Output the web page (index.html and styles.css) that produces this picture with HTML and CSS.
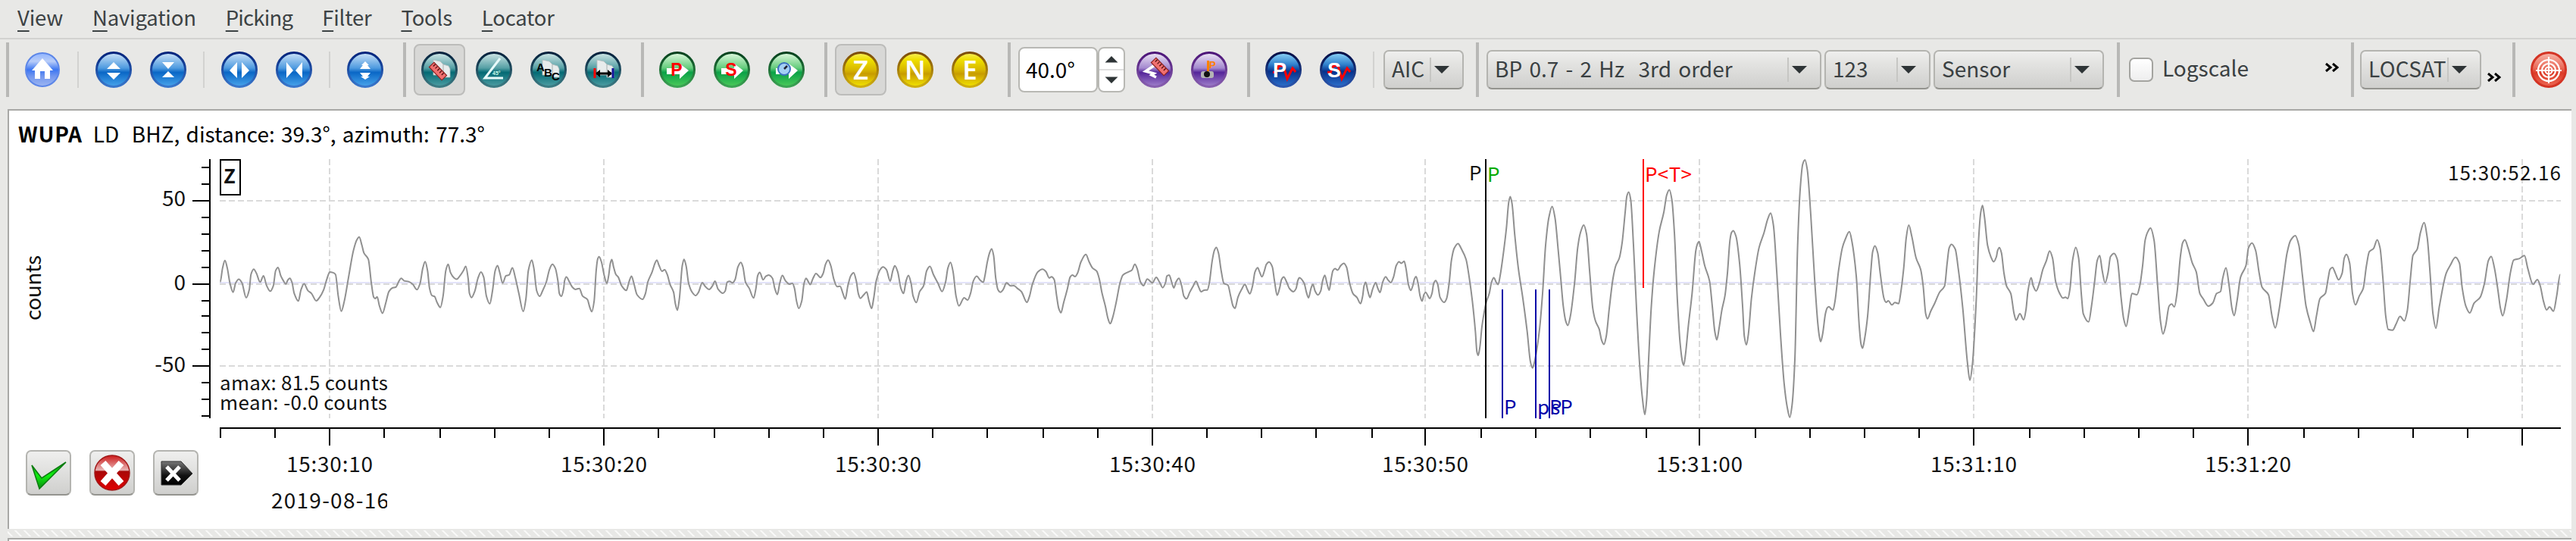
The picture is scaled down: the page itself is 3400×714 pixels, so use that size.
FILE: index.html
```html
<!DOCTYPE html>
<html lang="en">
<head>
    <meta charset="UTF-8">
    <title>Picker</title>
    <link rel="stylesheet" href="styles.css">
</head>
<body>

<svg class="defs" width="0" height="0">
    <defs>
        <linearGradient id="home" x1="0" y1="0" x2="0" y2="1"><stop offset="0" stop-color="#8fb4ff"/><stop offset=".25" stop-color="#b9cdf8"/><stop offset=".5" stop-color="#3c76f2"/><stop offset=".7" stop-color="#7397ee"/><stop offset="1" stop-color="#9db6f2"/></linearGradient>
        <linearGradient id="blue" x1="0" y1="0" x2="0" y2="1"><stop offset="0" stop-color="#cfe4f8"/><stop offset=".45" stop-color="#4f9be0"/><stop offset=".58" stop-color="#0a67c6"/><stop offset="1" stop-color="#4aa6ec"/></linearGradient>
        <linearGradient id="teal" x1="0" y1="0" x2="0" y2="1"><stop offset="0" stop-color="#d3e8e8"/><stop offset=".45" stop-color="#56a0a5"/><stop offset=".58" stop-color="#046a74"/><stop offset="1" stop-color="#4f9fa4"/></linearGradient>
        <linearGradient id="green" x1="0" y1="0" x2="0" y2="1"><stop offset="0" stop-color="#e2fae0"/><stop offset=".45" stop-color="#64cc7c"/><stop offset=".58" stop-color="#0ba147"/><stop offset="1" stop-color="#4ccb5a"/></linearGradient>
        <linearGradient id="yellow" x1="0" y1="0" x2="0" y2="1"><stop offset="0" stop-color="#f8ee60"/><stop offset=".2" stop-color="#efe000"/><stop offset=".5" stop-color="#d8b800"/><stop offset=".62" stop-color="#c89c00"/><stop offset="1" stop-color="#f4e600"/></linearGradient>
        <linearGradient id="purple" x1="0" y1="0" x2="0" y2="1"><stop offset="0" stop-color="#efe8f6"/><stop offset=".45" stop-color="#a489cf"/><stop offset=".58" stop-color="#55259a"/><stop offset="1" stop-color="#a181cc"/></linearGradient>
        <linearGradient id="navy" x1="0" y1="0" x2="0" y2="1"><stop offset="0" stop-color="#8fd6f8"/><stop offset=".35" stop-color="#2f80cc"/><stop offset=".55" stop-color="#06328c"/><stop offset="1" stop-color="#2c70cc"/></linearGradient>
        <linearGradient id="red" x1="0" y1="0" x2="0" y2="1"><stop offset="0" stop-color="#f8b8ac"/><stop offset=".45" stop-color="#ea6a58"/><stop offset=".6" stop-color="#dc3c28"/><stop offset="1" stop-color="#ec6854"/></linearGradient>
        <linearGradient id="darkred" x1="0" y1="0" x2="0" y2="1"><stop offset="0" stop-color="#cc1818"/><stop offset=".42" stop-color="#e8b4b4"/><stop offset=".46" stop-color="#a80808"/><stop offset="1" stop-color="#e00000"/></linearGradient>
        <linearGradient id="tag" x1="0" y1="0" x2="0" y2="1"><stop offset="0" stop-color="#777"/><stop offset=".6" stop-color="#111"/><stop offset="1" stop-color="#000"/></linearGradient>
        <linearGradient id="check" x1="0" y1="0" x2="0" y2="1"><stop offset="0" stop-color="#0a9a10"/><stop offset=".5" stop-color="#10f010"/><stop offset="1" stop-color="#0a8a10"/></linearGradient>
        <linearGradient id="blueRim" x1="0" y1="0" x2="0" y2="1"><stop offset="0" stop-color="#02237c"/><stop offset="1" stop-color="#3a78cc"/></linearGradient>
        <linearGradient id="tealRim" x1="0" y1="0" x2="0" y2="1"><stop offset="0" stop-color="#04203c"/><stop offset="1" stop-color="#3c7c84"/></linearGradient>
        <linearGradient id="greenRim" x1="0" y1="0" x2="0" y2="1"><stop offset="0" stop-color="#04401c"/><stop offset="1" stop-color="#3ca454"/></linearGradient>
        <linearGradient id="yellowRim" x1="0" y1="0" x2="0" y2="1"><stop offset="0" stop-color="#7c4c08"/><stop offset="1" stop-color="#d0b010"/></linearGradient>
        <linearGradient id="purpleRim" x1="0" y1="0" x2="0" y2="1"><stop offset="0" stop-color="#4c1478"/><stop offset="1" stop-color="#8860b0"/></linearGradient>
        <linearGradient id="navyRim" x1="0" y1="0" x2="0" y2="1"><stop offset="0" stop-color="#020c44"/><stop offset="1" stop-color="#2c58b0"/></linearGradient>
        <path id="pages" d="M16 11l9 2 4 4v14H16zM29 17l7 2 2 4v11h-9z" fill="#e8ecec" stroke="#b4bcbc" stroke-width=".8"/>
        <path id="arrow" d="M10 22h17v-6l12 9-12 11v-6H10z" fill="#fff"/>
        <g id="ruler"><rect x="-12" y="-4.5" width="24" height="9" fill="#f07070" stroke="#8c2020" stroke-width="1.2"/><path d="M-9-4v4M-5-4v4M-1-4v4M3-4v4M7-4v4" stroke="#501010" stroke-width="1.3"/></g>
    </defs>
</svg>

<nav class="menu">
    <span><u>V</u>iew</span>
    <span><u>N</u>avigation</span>
    <span class="tight"><u>P</u>icking</span>
    <span><u>F</u>ilter</span>
    <span><u>T</u>ools</span>
    <span><u>L</u>ocator</span>
</nav>

<div class="toolbar">
    <i class="handle first"></i>
    <button class="tool"><svg viewBox="0 0 48 48"><circle cx="24" cy="24" r="22" fill="url(#home)" stroke="#5c86e8" stroke-width="2"/><path d="M24 9L38 25h-4v11h-7V26h-6v10h-7V25h-4z" fill="#fff"/></svg></button>
    <i class="sep"></i>
    <button class="tool"><svg viewBox="0 0 48 48"><circle class="ball blue" cx="24" cy="24" r="22.5"/><path d="M24 14l9 9H15zM24 37l9-9H15z" fill="#fff"/></svg></button>
    <button class="tool"><svg viewBox="0 0 48 48"><circle class="ball blue" cx="24" cy="24" r="22.5"/><path d="M24 23l8-9H16zM24 26l8 8H16z" fill="#fff"/></svg></button>
    <i class="sep"></i>
    <button class="tool"><svg viewBox="0 0 48 48"><circle class="ball blue" cx="24" cy="24" r="22.5"/><path d="M21 14v21L11 25zM27 14v21l10-10z" fill="#fff"/></svg></button>
    <button class="tool"><svg viewBox="0 0 48 48"><circle class="ball blue" cx="24" cy="24" r="22.5"/><path d="M14 14v21l9-10zM35 14v21l-9-10z" fill="#fff"/></svg></button>
    <i class="sep"></i>
    <button class="tool"><svg viewBox="0 0 48 48"><circle class="ball blue" cx="24" cy="24" r="22.5"/><path d="M24 13l5 5h-2l4 5H17l4-5h-2zM17 28h14l-4 5h3l-6 4-6-4h3z" fill="#fff"/></svg></button>

    <i class="handle"></i>
    <button class="tool active"><svg viewBox="0 0 48 48"><circle class="ball teal" cx="24" cy="24" r="22.5"/><use href="#pages"/><use href="#ruler" transform="translate(22 26) rotate(46)"/></svg></button>
    <button class="tool"><svg viewBox="0 0 48 48"><circle class="ball teal" cx="24" cy="24" r="22.5"/><path d="M32 9L12 35h24" fill="none" stroke="#e8fafa" stroke-width="3"/><text x="22" y="31" class="tiny">45°</text></svg></button>
    <button class="tool"><svg viewBox="0 0 48 48"><circle class="ball teal" cx="24" cy="24" r="22.5"/><use href="#pages"/><g class="abc"><text x="8" y="26">A</text><text x="18" y="33">B</text><text x="28" y="38">C</text></g></svg></button>
    <button class="tool"><svg viewBox="0 0 48 48"><circle class="ball teal" cx="24" cy="24" r="22.5"/><use href="#pages"/><path d="M15 29h20" stroke="#000" stroke-width="3"/><path d="M14 29l6-5v10zM36 29l-6-5v10z"/><path d="M13 22v13" stroke="#f00" stroke-width="3"/><path d="M37 22v13" stroke="#11119a" stroke-width="3"/></svg></button>

    <i class="handle"></i>
    <button class="tool"><svg viewBox="0 0 48 48"><circle class="ball green" cx="24" cy="24" r="22.5"/><use href="#arrow"/><text x="23" y="32" class="phase">P</text></svg></button>
    <button class="tool"><svg viewBox="0 0 48 48"><circle class="ball green" cx="24" cy="24" r="22.5"/><use href="#arrow"/><text x="23" y="32" class="phase">S</text></svg></button>
    <button class="tool"><svg viewBox="0 0 48 48"><circle class="ball green" cx="24" cy="24" r="22.5"/><use href="#arrow"/><circle cx="21" cy="23" r="8" fill="#a4d0f4" stroke="#3c70c0" stroke-width="2"/><path d="M25 19l-4 4" fill="none" stroke="#223" stroke-width="2.5"/></svg></button>

    <i class="handle"></i>
    <button class="tool active"><svg viewBox="0 0 48 48"><circle class="ball yellow" cx="24" cy="24" r="22.5"/><text x="24" y="37" class="comp">Z</text></svg></button>
    <button class="tool"><svg viewBox="0 0 48 48"><circle class="ball yellow" cx="24" cy="24" r="22.5"/><text x="24" y="37" class="comp">N</text></svg></button>
    <button class="tool"><svg viewBox="0 0 48 48"><circle class="ball yellow" cx="24" cy="24" r="22.5"/><text x="24" y="37" class="comp">E</text></svg></button>

    <i class="handle"></i>
    <div class="spin">
        <span class="value">40.0°</span>
        <span class="steps"><svg viewBox="0 0 34 56"><path d="M17 9l9 9H8zM17 47l9-9H8z" fill="#2e3436"/><path d="M0 28h34" stroke="#ddd" stroke-width="2"/></svg></span>
    </div>
    <button class="tool"><svg viewBox="0 0 48 48"><circle class="ball purple" cx="24" cy="24" r="22.5"/><path d="M24 18L12 26l11 3-3 2 6 3" fill="none" stroke="#fff" stroke-width="3.5"/><use href="#ruler" transform="translate(31 20) rotate(46)"/></svg></button>
    <button class="tool"><svg viewBox="0 0 48 48"><circle class="ball purple" cx="24" cy="24" r="22.5"/><rect x="13" y="26" width="17" height="9" rx="3" fill="#b4b4b4"/><circle cx="21" cy="30" r="4" fill="#111"/><path d="M22.500 26V12" stroke="#ff8000" stroke-width="3"/><text x="24" y="22" class="ip">P</text></svg></button>

    <i class="handle"></i>
    <button class="tool"><svg viewBox="0 0 48 48"><circle class="ball navy" cx="24" cy="24" r="22.5"/><path class="wiggle" d="M10 27l4 1 4-9h6l5 17 7-14 4 5"/><text x="19" y="34" class="auto">P</text></svg></button>
    <button class="tool"><svg viewBox="0 0 48 48"><circle class="ball navy" cx="24" cy="24" r="22.5"/><path class="wiggle" d="M10 27l4 1 4-9h6l5 17 7-14 4 5"/><text x="19" y="34" class="auto">S</text></svg></button>
    <i class="sep"></i>
    <div class="combo aic"><span>AIC</span></div>

    <i class="handle"></i>
    <div class="combo filter"><span>BP 0.7 - 2 Hz&nbsp; 3rd order</span></div>
    <div class="combo num"><span>123</span></div>
    <div class="combo unit"><span>Sensor</span></div>

    <i class="handle"></i>
    <label class="check"><i></i><span>Logscale</span></label>
    <svg class="more" viewBox="0 0 18 12"><path d="M1 1l6 5-6 5M10 1l6 5-6 5"/></svg>

    <i class="handle"></i>
    <div class="combo loc"><span>LOCSAT</span></div>
    <svg class="more low" viewBox="0 0 18 12"><path d="M1 1l6 5-6 5M10 1l6 5-6 5"/></svg>

    <i class="handle"></i>
    <button class="tool"><svg viewBox="0 0 48 48"><circle cx="24" cy="24" r="22.5" fill="url(#red)" stroke="#d43424" stroke-width="3"/><g fill="none" stroke="#fff" stroke-width="2.2"><circle cx="24" cy="25" r="14"/><circle cx="24" cy="25" r="9"/><circle cx="24" cy="25" r="4.500"/><path d="M24 7v35M7 25h34"/></g></svg></button>
</div>

<main class="panel">
    <div class="station"><b>WUPA</b><span>LD&nbsp; BHZ, distance: 39.3°, azimuth: 77.3°</span></div>

    <svg class="yaxis" viewBox="12 210 268 346">
        <g id="yticks" class="axis"></g>
        <text x="245" y="272" text-anchor="end">50</text>
        <text x="245" y="383" text-anchor="end">0</text>
        <text x="245" y="491" text-anchor="end">-50</text>
        <text transform="translate(54 423) rotate(-90)" textLength="86">counts</text>
    </svg>

    <svg class="plot" viewBox="290 210 3090 346">
        <g id="grid" class="grid"></g>
        <path d="M290 373H3380" stroke="#e4e4fa" stroke-width="2"/>
        <path id="trace" class="trace"/>
        <rect x="291" y="211" width="26" height="46" fill="#fff" stroke="#000" stroke-width="2"/>
        <text x="295" y="242" class="small bold">Z</text>
        <text x="290" y="515" class="small" textLength="222">amax: 81.5 counts</text>
        <text x="290" y="541" class="small" textLength="221">mean: -0.0 counts</text>
        <text x="3231" y="238" class="small" textLength="149">15:30:52.16</text>

        <path d="M1961 210V552" stroke="#000" stroke-width="2"/>
        <text x="1939" y="238" class="small">P</text>
        <text x="1963" y="240" class="small green-pick">P</text>
        <path d="M2169 210V380" stroke="#f00" stroke-width="2"/>
        <text x="2171" y="240" class="small red-pick" textLength="62">P&lt;T&gt;</text>
        <path d="M1983 382V552M2027 382V552M2045 382V552" stroke="#0000a8" stroke-width="2"/>
        <text x="1985" y="547" class="small theo">P</text>
        <text x="2029" y="547" class="small theo">pP</text>
        <text x="2047" y="547" class="small theo">sP</text>
    </svg>

    <div class="actions">
        <button><svg viewBox="0 0 56 56"><path d="M6 18l13 17L51 14 16 49z" fill="url(#check)" stroke="#0c7c10" stroke-width="1.500"/></svg></button>
        <button><svg viewBox="0 0 56 56"><circle cx="28" cy="28" r="23" fill="url(#darkred)" stroke="#a01818" stroke-width="1.500"/><path d="M16 15l24 27M40 15L16 42" stroke="#fff" stroke-width="9"/></svg></button>
        <button><svg viewBox="0 0 56 56"><path d="M9 13h26l15 16-15 15H9z" fill="url(#tag)" stroke="#333"/><path d="M16 20l17 18M33 20L16 38" stroke="#fff" stroke-width="5"/></svg></button>
    </div>

    <svg class="xaxis" viewBox="290 556 3090 142">
        <g id="xticks" class="axis"></g>
        <g id="xlabels"></g>
    </svg>
</main>
<div class="splitter"></div>
<div class="next"></div>

<script src="plot.js"></script>
</body>
</html>
```
FILE: styles.css
```css
body {
    margin: 0;
    width: 3400px;
    height: 714px;
    overflow: hidden;
    background: #e8e8e6;
    font-family: "Noto Sans CJK SC", "Noto Sans", sans-serif;
    font-size: 28px;
    line-height: 36px;
    color: #3a4042;
}
.defs {
    display: block;
}
button {
    border: none;
    background: none;
    padding: 0;
    margin: 0;
}
.menu {
    display: flex;
    gap: 39px;
    box-sizing: border-box;
    height: 52px;
    padding: 4px 0 0 23px;
    border-bottom: 2px solid #d2d2d0;
    font-size: 27.5px;
    letter-spacing: -0.2px;
    color: #3c4244;
}
.menu .tight {
    letter-spacing: -0.8px;
}
.menu u {
    text-decoration-thickness: 2px;
    text-underline-offset: 6px;
}
.toolbar {
    display: flex;
    align-items: center;
    height: 80px;
    margin-bottom: 12px;
    white-space: nowrap;
}
.handle {
    flex: none;
    width: 4px;
    height: 72px;
    margin: 0 8px 0 14px;
    background: #b8b8b6;
}
.handle.first {
    margin-left: 8px;
}
.sep {
    flex: none;
    width: 2px;
    height: 48px;
    margin: 0 10px;
    background: #d2d2d0;
}
.tool {
    flex: none;
    box-sizing: border-box;
    width: 68px;
    height: 68px;
    margin: 0 2px;
    border: 2px solid transparent;
    border-radius: 8px;
    display: flex;
    align-items: center;
    justify-content: center;
}
.tool.active {
    background: #d8d8d6;
    border-color: #bcbcba;
}
.tool svg {
    width: 48px;
    height: 48px;
}
.ball {
    stroke-width: 3px;
}
.blue { fill: url(#blue); stroke: url(#blueRim); }
.teal { fill: url(#teal); stroke: url(#tealRim); }
.green { fill: url(#green); stroke: url(#greenRim); }
.yellow { fill: url(#yellow); stroke: url(#yellowRim); }
.purple { fill: url(#purple); stroke: url(#purpleRim); }
.navy { fill: url(#navy); stroke: url(#navyRim); }
.tool text {
    font-family: "Liberation Sans", Arial, sans-serif;
    font-weight: bold;
}
.tiny {
    font-size: 7px;
    fill: #cfe;
}
.abc {
    font-size: 15px;
    fill: #000;
}
.phase {
    font-size: 23px;
    fill: #f00;
    text-anchor: middle;
}
.comp {
    font-size: 35px;
    fill: #fff;
    text-anchor: middle;
}
.tool .comp {
    font-family: "Noto Sans", sans-serif;
    font-weight: 600;
}
.ip {
    font-size: 13px;
    fill: #ff8000;
}
.auto {
    font-size: 27px;
    fill: #fff;
    text-anchor: middle;
}
.wiggle {
    fill: none;
    stroke: #f00;
    stroke-width: 3px;
}
.spin {
    flex: none;
    display: flex;
    box-sizing: border-box;
    width: 141px;
    height: 60px;
    margin: 0 3px 0 2px;
    color: #000;
}
.spin span {
    box-sizing: border-box;
    background: #fff;
    border: 2px solid #b8b8b4;
    border-radius: 8px;
}
.value {
    width: 105px;
    padding: 9px 0 0 8px;
}
.steps {
    width: 36px;
}
.steps svg {
    display: block;
    width: 32px;
    height: 56px;
}
.combo {
    flex: none;
    position: relative;
    box-sizing: border-box;
    height: 52px;
    margin-right: 4px;
    padding: 4px 0 0 9px;
    border: 2px solid #b4b4b0;
    border-bottom-color: #94948f;
    border-radius: 7px;
    background: linear-gradient(#efefee, #e4e4e2 30%, #cfcfcd);
}
.combo::before {
    content: "";
    position: absolute;
    top: 8px;
    right: 41px;
    width: 2px;
    height: 32px;
    background: #c6c6c3;
}
.combo::after {
    content: "";
    position: absolute;
    top: 19px;
    right: 17px;
    border: 10px solid transparent;
    border-top-color: #2e3436;
    border-bottom: none;
}
.aic { width: 106px; margin-left: 2px; margin-right: 2px; }
.filter { width: 442px; margin-left: 2px; word-spacing: 3px; }
.num { width: 140px; }
.unit { width: 225px; margin-right: 3px; }
.loc { width: 160px; margin: 0 8px 0 0; letter-spacing: 0.3px; }
.check {
    display: flex;
    align-items: center;
    width: 254px;
    margin-left: 4px;
}
.check i {
    box-sizing: border-box;
    width: 32px;
    height: 32px;
    margin-right: 12px;
    border: 2px solid #a4a4a0;
    border-radius: 7px;
    background: linear-gradient(#fff, #eee);
}
.check span {
    margin-top: -6px;
}
.more {
    flex: none;
    width: 18px;
    height: 12px;
    margin: -6px 2px 0 8px;
    fill: none;
    stroke: #000;
    stroke-width: 3px;
}
.more.low {
    margin: 19px 1px 0 0;
}
.panel {
    box-sizing: border-box;
    display: grid;
    grid-template-columns: 268px 3090px;
    grid-template-rows: 64px 346px 142px;
    column-gap: 10px;
    width: 3384px;
    height: 554px;
    margin-left: 10px;
    border-top: 2px solid #a8a8a6;
    border-left: 2px solid #a8a8a6;
    background: #fff;
    color: #000;
}
.panel svg {
    display: block;
}
.panel text {
    fill: #111;
}
.station {
    grid-column: 1 / 3;
    padding: 12px 0 0 12px;
    white-space: nowrap;
    word-spacing: 2px;
}
.station b {
    margin-right: 14px;
    letter-spacing: 0.8px;
}
.yaxis {
    width: 268px;
    height: 346px;
    overflow: visible;
}
.plot {
    width: 3090px;
    height: 346px;
}
.xaxis {
    width: 3090px;
    height: 142px;
}
.small {
    font-size: 26px;
}
.bold {
    font-weight: bold;
}
.panel .green-pick { fill: #00aa00; }
.panel .red-pick { fill: #f00; }
.panel .theo { fill: #0000a8; }
.axis {
    stroke: #000;
    stroke-width: 2px;
    fill: none;
}
.grid {
    stroke: #dadada;
    stroke-width: 2px;
    stroke-dasharray: 8 4;
}
.trace {
    fill: none;
    stroke: #909090;
    stroke-width: 2px;
}
.actions {
    display: flex;
    gap: 24px;
    padding: 38px 0 0 22px;
}
.actions button {
    box-sizing: border-box;
    width: 60px;
    height: 60px;
    border: 2px solid #b4b4b0;
    border-bottom-color: #94948f;
    border-radius: 7px;
    background: linear-gradient(#efefee, #cfcfcd);
}
.splitter {
    height: 8px;
    margin-left: 10px;
    width: 3384px;
    border-top: 2px solid #e8e8e6;
    border-bottom: 2px solid #e8e8e6;
    background: repeating-linear-gradient(45deg, #e8e8e6 0 3px, #f8f8f7 3px 5.500px, #e8e8e6 5.500px 8.485px);
}
.next {
    width: 3382px;
    height: 2px;
    margin-left: 10px;
    border-top: 2px solid #a8a8a6;
    border-left: 2px solid #a8a8a6;
    background: #fff;
}
```
FILE: plot.js
```js
// trace blocks: x origin, units per pixel, then x,y pairs
const blocks = [
    [0, 2.24, `651,545 658,490 665,460 672,490 680,550 689,585 697,548 706,534 715,547 728,607 737,575 742,515 750,494 758,510 769,545
        779,520 788,558 799,581 808,560 815,500 822,487 830,520 838,540 845,553 851,537 857,530 863,545 870,590 882,620 890,575 899,552
        910,578 921,590 935,619 945,605 957,575 966,535 975,505 985,508 992,515 1000,600 1009,660 1018,620 1030,530 1045,420 1055,378
        1062,367 1070,400 1076,430 1089,455 1098,550 1105,605 1109,610 1115,603 1122,640 1131,668 1140,630 1150,582 1160,568 1170,565
        1180,540 1186,530 1195,540 1208,543 1220,553 1233,575 1242,550 1250,490 1257,464 1264,500 1270,570 1277,598 1285,602 1292,625
        1302,645 1310,600 1318,500 1325,475 1332,508 1342,528 1350,534 1360,520 1370,500 1377,483 1384,530 1388,590 1394,606 1404,580
        1413,530 1422,505 1430,525 1438,600 1448,631 1456,580 1464,500 1471,480 1478,510 1486,549 1496,520 1505,517 1515,489 1524,530
        1534,590 1547,661 1555,610 1562,500`],
    [700, 2.613, `5,458 12,490 22,580 32,601 42,580 55,545 66,495 76,475 86,490 95,540 100,590 107,601 115,570 118,540 124,525 135,545
        145,565 155,574 169,570 180,600 197,614 205,645 212,662 220,620 227,500 232,455 237,445 245,465 255,520 264,550 270,520 276,470
        281,456 287,485 295,515 303,525 315,560 331,578 340,545 349,522 357,550 368,595 387,613 397,590 405,545 420,505 430,470 436,458
        444,480 454,502 463,496 472,515 482,555 494,585 500,630 507,656 514,610 524,480 530,455 537,480 546,550 558,585 570,598 580,585
        593,547 603,562 617,574 628,560 637,541 647,572 664,589 672,580 679,545 687,542 697,548 706,535 716,485 726,467 733,485 742,545
        755,570 770,608 778,570 784,520 791,507 803,536 812,522 822,517 835,530 843,570 852,594 860,550 869,519 880,540 893,553 904,550
        911,570 918,620 926,649 936,620 944,550 951,530 957,540 965,555 975,530 985,511 1001,527 1010,510 1018,475 1027,458 1036,480
        1047,535 1058,563 1068,561 1078,590 1086,612 1095,560 1105,520 1115,508 1124,540 1131,590 1138,609 1150,595 1160,584 1168,620
        1177,649 1184,610 1193,540 1207,495 1216,485 1228,496 1241,541 1250,500 1257,481 1267,505 1278,570 1287,590 1296,540 1304,519
        1313,550 1320,600 1331,626 1343,582 1356,560 1367,500 1378,483 1390,515 1405,548 1420,582 1432,545 1440,490 1449,467 1458,505
        1468,600 1478,639 1496,607 1508,616 1518,590 1528,540 1539,522 1552,538 1562,546`],
    [1300, 2.8, `0,520 8,470 17,430 25,414 32,440 40,530 48,575 57,585 67,575 80,548 95,560 107,559 120,570 135,583 155,625 165,600
        175,555 195,505 213,494 225,503 238,529 246,524 256,535 265,600 273,650 281,666 290,630 305,570 315,525 323,517 333,523 342,510
        355,465 373,436 385,465 398,490 413,502 422,530 433,590 445,640 455,690 463,709 472,685 485,625 500,545 510,517 530,505 543,498
        554,475 562,490 575,545 586,559 600,533 619,548 633,526 645,545 657,567 668,545 672,522 681,517 690,545 698,568 706,545 717,530
        727,560 735,600 745,611 757,585 770,560 780,542 790,565 799,583 810,577 822,576 829,550 840,460 848,420 855,408 863,430 873,500
        883,550 898,557 908,600 917,640 924,649 935,605 948,575 961,554 970,575 979,591 989,560 998,505 1008,488 1015,505 1024,524
        1033,500 1040,475 1050,466 1062,485 1070,540 1080,597 1090,565 1096,535 1104,525 1115,545 1125,570 1140,583 1150,570 1156,540
        1162,528 1180,550 1188,585 1196,607 1205,570 1212,554 1220,580 1231,596 1241,580 1248,540 1256,518 1264,550 1272,577 1280,530
        1286,500 1294,492 1303,498 1315,480 1326,471 1336,485 1348,550 1360,590 1375,606 1388,630 1396,600 1401,560 1407,546 1415,580
        1423,606 1432,575 1444,547 1452,570 1460,586 1470,545 1481,524 1490,537 1500,547 1510,525 1520,480 1530,465 1539,471`],
    [1850, 3, `10,463 17,490 27,555 36,578 44,560 51,532 57,523 65,550 73,600 81,620 88,595 95,585 103,597 111,610 120,590 127,550
        135,539 143,555 152,605 168,625 178,610 188,550 197,460 208,412 223,393 237,415 255,455 268,530 280,620 292,740 298,820 303,834
        310,800 318,720 335,625 347,590 356,545 365,528 374,545 382,555 390,520 403,430 415,330 424,230 430,208 437,235 448,360 462,490
        480,610 497,740 510,860 518,884 526,860 545,740 558,590 570,400 583,290 596,247 607,290 620,420 630,530 640,640 650,700 658,716
        668,680 685,545 697,410 708,350 721,320 732,355 745,510 757,650 768,700 782,730 792,775 801,791 810,760 822,650 837,530 848,480
        862,450 873,390 885,270 892,205 899,190 907,220 918,400 930,650 943,880 953,1000 963,1068 970,1010 978,850 988,650 1000,500
        1020,345 1038,270 1050,200 1060,181 1070,220 1080,350 1092,620 1103,790 1112,860 1117,873 1124,830 1135,720 1150,590 1165,420
        1171,395 1177,385 1187,420 1200,480 1219,540 1230,640 1240,740`],
    [2260, 3, `18,773 28,720 38,655 50,600 60,510 70,380 76,350 83,342 94,365 108,470 120,640 127,760 135,793 143,750 155,610 168,510
        185,410 205,350 220,295 231,273 242,320 255,500 270,750 285,950 297,1040 307,1079 316,1030 327,850 338,400 348,180 358,80 367,63
        376,100 390,280 405,530 418,710 424,760 429,780 437,750 448,670 455,647 462,642 470,650 478,655 486,620 500,500 515,410 525,380
        543,346 553,385 570,520 582,720 589,790 595,806 603,770 615,680 628,500 635,425 644,402 655,430 665,510 680,610 688,625 697,619
        711,635 723,626 738,630 745,595 758,490 768,370 778,320 790,365 807,450 825,495 835,560 845,670 852,690 865,660 880,630 900,585
        920,560 930,470 938,410 947,396 962,415 975,500 992,650 1010,860 1020,932 1030,870 1045,620 1055,370 1063,270 1070,242 1078,290
        1090,400 1103,445 1114,465 1125,445 1130,420 1137,409 1145,430 1155,510 1165,560 1182,590 1195,670 1203,695 1218,670 1233,694
        1242,655 1250,580`],
    [2660, 2.119, `44,528 50,560 58,580 67,550 77,495 87,460 96,422 104,450 113,545 124,590 133,608 140,605 147,610 153,570 160,460
        169,408 177,450 185,600 190,670 205,702 213,640 222,540 229,460 236,440 243,500 251,548 259,510 266,445 276,432 285,455 296,610
        303,690 310,720 318,660 326,590 340,595 348,560 356,480 363,380 371,345 378,332 388,380 398,560 406,700 413,750 420,720 430,640
        437,632 445,643 452,590 462,440 468,390 474,378 483,410 495,470 506,505 516,590 525,610 540,640 552,628 563,590 574,582 580,530
        589,489 598,560 606,650 612,677 620,620 630,525 645,480 652,410 662,391 672,420 682,510 690,565 708,595 718,680 727,726 737,660
        750,530 760,430 770,380 783,362 793,400 803,520 813,640 825,705 834,740 842,680 852,610 867,590 875,530 880,495 887,487 895,510
        904,536 914,510 920,450 926,436 935,470 943,590 951,635 962,600 973,570 982,480 990,425 1002,412 1012,378 1020,410 1028,530
        1036,680 1043,732 1055,735 1065,710 1076,680 1088,698 1096,660 1105,530 1112,440 1124,415 1133,350 1143,310 1152,370 1160,510
        1168,670 1176,727 1186,640 1205,510 1216,480 1231,447 1242,470 1250,570 1260,640 1271,667 1283,628 1300,605 1312,550 1323,460
        1331,444 1340,490 1350,580 1357,650 1363,678 1373,620 1385,505 1394,458 1410,452 1424,440 1433,490 1448,554 1460,535 1468,560
        1477,620 1486,655 1494,643 1505,660 1514,600 1524,515`]
];

const pts = [];
for (const [x0, scale, data] of blocks) {
    for (const pair of data.trim().split(/\s+/)) {
        const [x, y] = pair.split(',').map(Number);
        pts.push([x0 + x / scale, 190 + y / 2.99]);
    }
}

// monotone slopes, flat at the peaks
const slope = pts.map((p, i) => {
    if (i === 0 || i === pts.length - 1) return 0;
    const a = (p[1] - pts[i - 1][1]) / (p[0] - pts[i - 1][0]);
    const b = (pts[i + 1][1] - p[1]) / (pts[i + 1][0] - p[0]);
    return a * b <= 0 ? 0 : 2 * a * b / (a + b);
});
let d = `M${pts[0][0]} ${pts[0][1]}`;
for (let i = 1; i < pts.length; i++) {
    const [xa, ya] = pts[i - 1];
    const [xb, yb] = pts[i];
    const h = (xb - xa) / 3;
    d += `C${xa + h} ${ya + h * slope[i - 1]} ${xb - h} ${yb - h * slope[i]} ${xb} ${yb}`;
}
document.getElementById('trace').setAttribute('d', d);

// y axis
let y = 'M277 210V552';
for (const t of [221, 243, 287, 309, 331, 353, 397, 417, 439, 461, 505, 527, 549]) y += `M266 ${t}H277`;
for (const t of [265, 375, 483]) y += `M254 ${t}H277`;
document.getElementById('yticks').innerHTML = `<path d="${y}"/>`;

// x axis
const major = [435, 797, 1159, 1521, 1881, 2243, 2605, 2967, 3329];
let x = 'M290 565H3380M291 565V578';
for (let i = -1; i <= 40; i++) {
    const t = Math.round((434.6 + i * 72.35) / 2) * 2 + 1;
    if (i % 5) x += `M${t} 565V578`;
}
for (const t of major) x += `M${t} 565V588`;
document.getElementById('xticks').innerHTML = `<path d="${x}"/>`;

let grid = '';
for (const t of [265, 375, 483]) grid += `<path d="M290 ${t}H3380"/>`;
for (const t of major) grid += `<path d="M${t} 210V552"/>`;
document.getElementById('grid').innerHTML = grid;

const names = ['15:30:10', '15:30:20', '15:30:30', '15:30:40', '15:30:50', '15:31:00', '15:31:10', '15:31:20'];
let labels = '';
names.forEach((n, i) => {
    labels += `<text x="${major[i] - 57}" y="623" textLength="114">${n}</text>`;
});
labels += '<svg x="350" y="640" width="161" height="44"><text x="8" y="31" textLength="155">2019-08-16</text></svg>';
document.getElementById('xlabels').innerHTML = labels;
```
